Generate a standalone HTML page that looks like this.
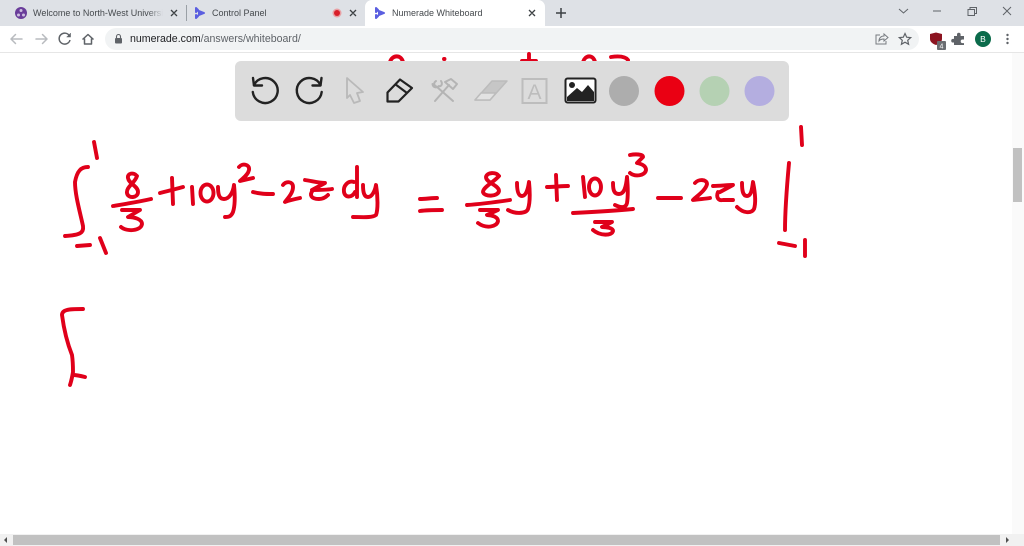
<!DOCTYPE html>
<html lang="en">
<head>
<meta charset="utf-8">
<title>Numerade Whiteboard</title>
<style>
html,body{margin:0;padding:0;width:1024px;height:546px;overflow:hidden;background:#fff;font-family:"Liberation Sans",sans-serif}
#page{position:absolute;left:0;top:0;width:1024px;height:546px;filter:blur(.35px)}
.a{position:absolute}
.t{font-size:9px;line-height:14px;color:#45494d;white-space:nowrap;overflow:hidden}
svg{position:absolute;left:0;top:0}
</style>
</head>
<body>
<div id="page">
<div class="a" style="left:0;top:0;width:1024px;height:26px;background:#dee1e6"></div>
<div class="a" style="left:365px;top:0;width:180px;height:26px;background:#fff;border-radius:7px 7px 0 0"></div>
<div class="a" style="left:0;top:26px;width:1024px;height:26px;background:#fff;border-bottom:1px solid #e6e6e6"></div>
<div class="a" style="left:105px;top:28px;width:814px;height:22px;background:#f1f3f4;border-radius:11px"></div>
<div class="a" style="left:186px;top:5px;width:1px;height:16px;background:#9aa0a6"></div>

<div class="a t" style="left:33px;top:6px;width:130px;-webkit-mask-image:linear-gradient(90deg,#000 88%,transparent);mask-image:linear-gradient(90deg,#000 88%,transparent)">Welcome to North-West University</div>
<div class="a t" style="left:212px;top:6px;width:110px">Control Panel</div>
<div class="a t" style="left:392px;top:6px;width:125px">Numerade Whiteboard</div>
<div class="a" style="left:130px;top:32px;font-size:10.6px;line-height:15px;color:#202124;white-space:nowrap">numerade.com<span style="color:#5f6368">/answers/whiteboard/</span></div>
<div class="a" style="left:975px;top:31px;width:16px;height:16px;border-radius:50%;background:#0b6b4b;color:#fff;font-size:8.5px;line-height:16px;text-align:center">B</div>

<!-- Scrollbars -->
<div class="a" style="left:1012px;top:53px;width:12px;height:481px;background:#fafafa"></div>
<div class="a" style="left:1013px;top:148px;width:9px;height:54px;background:#c1c1c1"></div>
<div class="a" style="left:0;top:534px;width:1024px;height:12px;background:#f1f1f1"></div>
<div class="a" style="left:13px;top:535px;width:987px;height:10px;background:#c1c1c1"></div>

<svg width="1024" height="546" viewBox="0 0 1024 546" xmlns="http://www.w3.org/2000/svg" fill="none">
<!-- Browser chrome icons -->
<g>
  <circle cx="21" cy="13" r="6" fill="#6a3d9a"/><circle cx="18.500" cy="15" r="1.500" fill="#cdbfe0"/><circle cx="23.500" cy="15" r="1.500" fill="#cdbfe0"/><circle cx="21" cy="10.500" r="1.500" fill="#cdbfe0"/>
  <g fill="#5b5fe0" stroke="#5b5fe0" stroke-width="2" stroke-linejoin="round">
    <path d="M196 8l2 2-2 2zM199 11l5 2-5 2zM196 15l2 1-2 2z"/>
    <path d="M376 8l2 2-2 2zM379 11l5 2-5 2zM376 15l2 1-2 2z"/>
  </g>
  <circle cx="337" cy="13" r="4.500" fill="#e8a0a4"/><circle cx="337" cy="13" r="3" fill="#d81f2a"/>
  <g stroke="#3c4043" stroke-width="1.300">
    <path d="M171 10l6 6M177 10l-6 6M350 10l6 6M356 10l-6 6M529 10l6 6M535 10l-6 6"/>
    <path d="M561 8v10M556 13h10" stroke-width="1.500"/>
  </g>
  <g stroke="#5f6368" stroke-width="1">
    <path d="M899 9l4.500 4 4.500-4"/><path d="M933 11h8"/>
    <path d="M968 9.500h6.500v6h-6.500zM970 9.500v-2h6.500v6h-2"/>
    <path d="M1003 7l8 8M1011 7l-8 8"/>
  </g>
  <g stroke="#b8bbbf" stroke-width="1.500" stroke-linecap="round" stroke-linejoin="round">
    <path d="M22 39H11M15.500 34.500L11 39l4.500 4.500"/>
    <path d="M36 39h11M42.500 34.500L47 39l-4.500 4.500"/>
  </g>
  <g stroke="#5f6368" stroke-width="1.500" stroke-linejoin="round">
    <path d="M69.500 36a5.500 5.500 0 1 0 .5 4"/>
    <path d="M70.500 33v4h-4" fill="#5f6368" stroke-width=".6"/>
    <path d="M82.500 39.500L88 34.500l5.500 5M84.500 38.500V44h7v-5.500"/>
  </g>
  <rect x="115" y="38" width="7" height="5.500" rx="1" fill="#5f6368"/>
  <path d="M116.500 38v-1.500a2 2 0 0 1 4 0V38" stroke="#5f6368" stroke-width="1.100"/>
  <g stroke="#777b80" stroke-width="1">
    <path d="M880 35h-4v9h10v-3"/><path d="M879 41c0-3 2-5 5-5v-2l4 3.500-4 3.500v-2c-2 0-4 .5-5 2z"/>
    <path d="M905 33.500l1.700 3.700 4 .4-3 2.700.9 4-3.600-2.100-3.600 2.100.9-4-3-2.700 4-.4z" stroke="#5f6368" stroke-width="1.200"/>
  </g>
  <path d="M930 34l6-1.500 6 1.500v5c0 3-3 5-6 6-3-1-6-3-6-6z" fill="#8c1420"/>
  <rect x="937" y="41" width="9" height="9" rx="1" fill="#6b6e72"/>
  <text x="941.500" y="48.500" font-size="7" fill="#fff" text-anchor="middle" font-family="Liberation Sans, sans-serif">4</text>
  <path d="M954 36h3v-1.500a1.800 1.800 0 0 1 3.600 0V36h3.400v3.500h-1.500a1.800 1.800 0 0 0 0 3.600h1.500V45h-10v-2.500h-1a1.800 1.800 0 0 1 0-3.600h1z" fill="#5f6368"/>
  <g fill="#5f6368"><circle cx="1007.500" cy="35" r="1.200"/><circle cx="1007.500" cy="39" r="1.200"/><circle cx="1007.500" cy="43" r="1.200"/></g>
</g>

<!-- Handwritten ink -->
<g stroke="#e0001a" stroke-width="3.900" stroke-linecap="round" stroke-linejoin="round">
  <title>Integral from -1 to 1 of 8/3 + 10y^2 - 2z dy = 8/3 y + 10y^3/3 - 2zy, evaluated from -1 to 1</title>
  <!-- strokes clipped by toolbar -->
  <path d="M390 62C392 55 401 54 403 62"/><path d="M444 59h.5"/><path d="M529 54v8M522 61h14"/><path d="M583 62C585 55 593 54 595 62"/><path d="M611 57c7-1 14-1 17 3"/>
  <!-- left integral -->
  <path d="M88 167C81 167 77 171 75 182C75 195 80 212 83 226C84 233 80 235 65 236"/>
  <path d="M94 142L97 158"/><path d="M77 246L90 245"/><path d="M100 238L106 253"/>
  <!-- 8/3 -->
  <path d="M137 176C134 172 127 173 128 178C129 184 138 186 138 192C138 198 128 199 127 193C126 187 135 183 137 176Z"/>
  <path d="M113 206C125 204 138 202 151 199"/>
  <path d="M122 210H140L128 217C134 217 142 219 142 224C141 231 127 232 121 227"/>
  <!-- +10y^2 -->
  <path d="M160 193C168 191 176 189 183 187"/><path d="M172 178L173 204"/>
  <path d="M192 187L193 204"/>
  <ellipse cx="207" cy="193" rx="6.500" ry="8.500"/>
  <path d="M218 187C218 194 219 199 224 199C229 199 233 193 234 185C235 195 235 206 233 212C231 217 228 217 225 217"/>
  <path d="M239 167C242 163 250 164 249 170C248 175 243 178 240 181C244 180 249 179 253 178"/>
  <!-- -2z dy -->
  <path d="M253 192C260 194 266 194 273 194"/>
  <path d="M283 185C286 181 293 181 293 187C293 193 288 198 285 202C290 200 295 199 300 198"/>
  <path d="M305 180C312 181 319 183 325 183L312 190C319 190 326 190 332 189"/>
  <path d="M313 190C309 195 311 199 319 199C323 199 326 197 328 195"/>
  <path d="M354 182C348 180 343 186 344 192C345 198 352 198 355 192"/><path d="M357 167L357 197"/>
  <path d="M363 185C363 192 364 197 368 197C372 197 375 191 376 185C378 197 378 210 376 215C372 218 362 217 353 217"/>
  <!-- equals -->
  <path d="M420 199C426 199 431 198 437 198"/><path d="M420 211C427 210 435 210 442 210"/>
  <!-- 8/3 y -->
  <path d="M499 176C496 172 487 172 486 177C486 183 499 185 499 191C498 197 484 197 483 192C483 187 494 182 499 176"/>
  <path d="M467 205C482 204 496 202 510 200"/>
  <path d="M480 210H498L487 215C492 215 498 217 498 221C497 227 486 229 478 223"/>
  <path d="M517 183C517 190 518 196 522 196C526 196 528 189 529 182C530 192 530 203 528 209C526 214 515 214 508 210"/>
  <!-- + 10y^3/3 -->
  <path d="M547 187C554 187 561 186 568 186"/><path d="M556 175L557 200"/>
  <path d="M583 177L585 197"/><ellipse cx="595" cy="187" rx="6" ry="8.500"/>
  <path d="M613 183C613 190 614 194 619 194C624 194 626 188 627 177C628 188 628 197 627 203C626 208 621 208 615 205"/>
  <path d="M573 213C593 212 613 211 633 209"/>
  <path d="M595 222H612L602 227C607 227 613 228 613 231C612 236 600 236 593 230"/>
  <path d="M630 155C635 154 643 154 643 157L637 163C642 164 646 166 646 170C645 176 635 177 630 173"/>
  <!-- -2zy -->
  <path d="M658 198C665 198 674 198 681 198"/>
  <path d="M695 183C698 179 707 179 707 184C706 190 697 196 693 200C699 199 705 199 710 198"/>
  <path d="M713 186C720 186 727 185 733 185L720 192"/><path d="M718 192C716 197 718 201 723 200C727 200 730 200 733 200"/>
  <path d="M742 183C742 191 743 196 747 196C751 196 752 190 753 182C755 192 756 203 754 209C751 214 743 213 737 207"/>
  <!-- evaluation bar -->
  <path d="M789 163C787 185 785 208 785 230"/>
  <path d="M801 127L802 145"/><path d="M779 243C784 244 790 245 795 246"/><path d="M805 240L805 256"/>
  <!-- bracket -->
  <path d="M83 309C76 309 70 309 67 310C63 311 62 313 62 315C64 330 68 345 72 355C73 362 73 368 73 372C72 378 71 382 70 385"/>
  <path d="M73 375C77 375 81 376 85 377"/>
</g>

<!-- Toolbar -->
<rect x="235" y="61" width="554" height="60" rx="6" fill="#dcdcdc"/>
<g stroke="#222" stroke-width="2.400" stroke-linecap="round" stroke-linejoin="round">
  <path d="M254 85A12.500 12.500 0 1 1 252.800 92"/><path d="M253 78L254 85.500H262"/>
  <path d="M320.500 85A12.500 12.500 0 1 0 321.700 92"/><path d="M321.500 78L320.500 85.500H312.500"/>
</g>
<path d="M347 78L363 92L357 93L360 101L354 103L350 95L347 98Z" stroke="#b9b9b9" stroke-width="1.800" stroke-linejoin="round"/>
<path d="M387.500 92.500L400 79.500L412 88L398.500 101.500H387.500ZM395 84L407 93" stroke="#222" stroke-width="2.200" stroke-linejoin="round"/>
<g stroke="#b4b4b4" stroke-width="2" stroke-linecap="round" stroke-linejoin="round">
  <path d="M436 81C433 83 434 86 437 87L453 101"/><path d="M432.500 84C433 88 437 88 439 86M441 81C443 84 441 87 439 86"/>
  <path d="M435 101L449 85"/><path d="M445 82L453 89L457 84L451 79Z"/>
</g>
<path d="M475 100L492 81H507L490 100Z" fill="#c6c6c6" stroke="#bcbcbc" stroke-width="1.500" stroke-linejoin="round"/>
<path d="M475 100L481 93H496L490 100Z" fill="#e2e2e2" stroke="#bcbcbc" stroke-width="1.500" stroke-linejoin="round"/>
<rect x="522.500" y="79" width="24" height="24" stroke="#bdbdbd" stroke-width="2"/>
<text x="534.500" y="99" font-size="21" fill="#bdbdbd" text-anchor="middle" font-family="Liberation Sans, sans-serif">A</text>
<rect x="565.500" y="78.500" width="30" height="24" rx="2" fill="#fff" stroke="#222" stroke-width="2"/>
<circle cx="572" cy="85" r="3" fill="#222"/>
<path d="M567 101V97L577 88L582 92L588 85L594 92V101Z" fill="#222"/>
<circle cx="624" cy="91" r="15" fill="#adadad"/>
<circle cx="669.500" cy="91" r="15" fill="#ea0013"/>
<circle cx="714.500" cy="91" r="15" fill="#b5d1b3"/>
<circle cx="759.500" cy="91" r="15" fill="#b4aee0"/>
<!-- Scrollbar arrows -->
<path d="M4 540l3-3v6zM1006 537l3 3-3 3z" fill="#505050"/>
</svg>
</div>
</body>
</html>
